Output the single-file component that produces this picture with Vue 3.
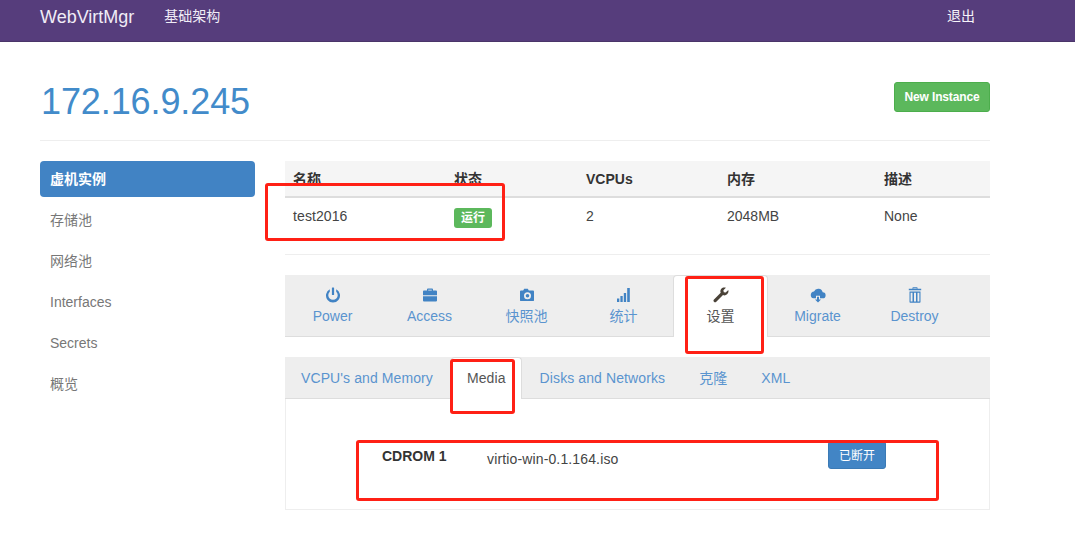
<script setup>
const side = ['虚机实例', '存储池', '网络池', 'Interfaces', 'Secrets', '概览']
const cols = ['名称', '状态', 'VCPUs', '内存', '描述']
const subs = ["VCPU's and Memory", 'Media', 'Disks and Networks', '克隆', 'XML']
const tabs = [
  { label: 'Power', icon: 'power' },
  { label: 'Access', icon: 'case' },
  { label: '快照池', icon: 'camera' },
  { label: '统计', icon: 'signal' },
  { label: '设置', icon: 'wrench', active: true },
  { label: 'Migrate', icon: 'cloud' },
  { label: 'Destroy', icon: 'trash' },
]
const marks = [
  { id: 'm1', cls: 'mark-row' },
  { id: 'm2', cls: 'mark-tab' },
  { id: 'm3', cls: 'mark-media' },
  { id: 'm4', cls: 'mark-cdrom' },
]
</script>

<template>
  <div class="page">
    <header class="navbar">
      <span class="brand">WebVirtMgr</span>
      <span class="nav-link">基础架构</span>
      <span class="logout">退出</span>
    </header>

    <div class="container">
      <div class="title-row">
        <h1>172.16.9.245</h1>
        <button class="btn-new">New Instance</button>
      </div>

      <div class="columns">
        <nav class="side">
          <a v-for="(s, i) in side" :key="s" :class="['side-item', { on: i === 0 }]">{{ s }}</a>
        </nav>

        <main class="main">
          <div class="tbl">
            <div class="tbl-row head">
              <span v-for="c in cols" :key="c">{{ c }}</span>
            </div>
            <div class="tbl-row body">
              <span class="wide">test2016</span>
              <span><b class="label">运行</b></span>
              <span>2</span>
              <span>2048MB</span>
              <span>None</span>
            </div>
          </div>

          <div class="tabs">
            <div v-for="t in tabs" :key="t.label" :class="['tab', { on: t.active }]">
              <svg class="ico" viewBox="0 0 16 16" fill="currentColor">
                <template v-if="t.icon === 'power'">
                  <path d="M4.800 2.300v2.400a4.700 4.700 0 1 0 6.400 0V2.300a7 7 0 1 1-6.400 0Z" />
                  <rect x="6.900" y="0.500" width="2.200" height="7.500" rx="0.500" />
                </template>
                <template v-else-if="t.icon === 'case'">
                  <path d="M5 3.600V2.400C5 1.900 5.400 1.500 5.900 1.500h4.200c.5 0 .9.4.9.9v1.200h3.100c.5 0 .9.4.9.9v3.700H1V4.500c0-.5.4-.9.900-.9H5Zm1.200 0h3.600V2.700H6.200v.9Z" />
                  <path d="M1 9.200h14v4.400c0 .5-.4.900-.9.900H1.900c-.5 0-.9-.4-.9-.9V9.200Z" />
                </template>
                <template v-else-if="t.icon === 'camera'">
                  <path fill-rule="evenodd" d="M1.900 3.500h2.300l1-1.700h3.600l1 1.700h4.300c.5 0 .9.400.9.900v8.800c0 .5-.4.900-.9.900H1.900c-.5 0-.9-.4-.9-.9V4.400c0-.5.4-.9.900-.9ZM8.500 5.300a3.500 3.500 0 1 0 0 7 3.500 3.500 0 0 0 0-7Zm0 1.700a1.800 1.800 0 1 1 0 3.600 1.800 1.800 0 0 1 0-3.600Z" />
                </template>
                <template v-else-if="t.icon === 'signal'">
                  <rect x="1" y="11.500" width="2.300" height="3.500" />
                  <rect x="4.400" y="9" width="2.300" height="6" />
                  <rect x="7.800" y="6" width="2.300" height="9" />
                  <rect x="11.200" y="1" width="2.600" height="14" />
                </template>
                <template v-else-if="t.icon === 'wrench'">
                  <path d="M15.300 3.100 12.700 5.600 10.800 5.200 10.400 3.300 12.900 .8C11.200.2 9.300.6 8.300 1.800 7.300 3 7.100 4.500 7.700 5.800L1 12.500c-.7.700-.7 1.700 0 2.300.6.700 1.600.7 2.300 0L10 8.100c1.400.6 3 .3 4.100-.8 1.200-1.100 1.700-2.700 1.200-4.200Z" />
                </template>
                <template v-else-if="t.icon === 'cloud'">
                  <path d="M12.700 5.300A4.600 4.600 0 0 0 4 4.400 3.500 3.500 0 0 0 3.500 11.300H6V8.800h4v2.500h2.500a3 3 0 0 0 .2-6Z" />
                  <path d="M7 9.800h2v2.600h2L8 15.600 5 12.400h2V9.800Z" />
                </template>
                <template v-else>
                  <path d="M6 .3h4c.3 0 .5.2.5.5v1h3.700v1.500H1.800V1.800h3.700v-1c0-.3.2-.5.500-.5Zm.3 .9v.6h3.400v-.6H6.300Z" />
                  <path fill-rule="evenodd" d="M2.500 4.600h11v10.500c0 .4-.3.700-.7.700H3.200c-.4 0-.7-.3-.7-.7V4.600Zm1.100 1.200v8.800h1.900V5.800H3.600Zm3.400 0v8.800h2V5.800h-2Zm3.500 0v8.800h1.900V5.800h-1.900Z" />
                </template>
              </svg>
              <span class="tab-label">{{ t.label }}</span>
            </div>
          </div>

          <div class="subtabs">
            <a v-for="(s, i) in subs" :key="s" :class="['sub', { on: i === 1 }]">{{ s }}</a>
          </div>

          <section class="panel">
            <div class="media-row">
              <strong class="cd">CDROM 1</strong>
              <span class="iso">virtio-win-0.1.164.iso</span>
              <button class="btn-eject">已断开</button>
            </div>
          </section>
        </main>
      </div>
    </div>

    <div v-for="m in marks" :key="m.id" :class="['mark', m.cls]"></div>
  </div>
</template>

<style>
html, body { margin: 0; background: #fff; }
</style>

<style scoped>
.page {
  position: relative;
  width: 1075px;
  height: 558px;
  overflow: hidden;
  font-family: "Liberation Sans", "Noto Sans CJK SC", sans-serif;
  font-size: 14px;
  line-height: 20px;
  color: #333;
}
.navbar {
  display: flex;
  align-items: center;
  height: 41px;
  padding: 0 40px;
  background: #563d7c;
  border-bottom: 1px solid #4a3569;
  color: #fff;
}
.brand { font-size: 18px; color: #f0ecf6; position: relative; top: -4px; }
.nav-link { margin-left: 30px; color: #f0ecf6; font-size: 14px; position: relative; top: -5px; }
.logout { margin-left: auto; margin-right: 60px; font-size: 14px; color: #f7f5fa; position: relative; top: -5px; }
.container { width: 950px; margin-left: 40px; }
.title-row {
  display: flex;
  align-items: center;
  justify-content: space-between;
  height: 98px;
  border-bottom: 1px solid #eee;
}
h1 {
  margin: 22px 0 0 1px;
  font-size: 36px;
  line-height: 40px;
  font-weight: 400;
  color: #428bca;
  letter-spacing: -.1px;
}
.btn-new {
  width: 96px;
  height: 30px;
  margin-top: 12px;
  padding: 0;
  border: 1px solid #4cae4c;
  border-radius: 3px;
  background: #5cb85c;
  color: #fff;
  font: 700 12px/18px "Liberation Sans", sans-serif;
  letter-spacing: -.15px;
}
.columns { display: flex; margin-top: 20px; }
.side { width: 215px; flex: none; display: flex; flex-direction: column; gap: 5px; }
.side-item {
  height: 36px;
  line-height: 36px;
  padding-left: 10px;
  border-radius: 4px;
  color: #777;
}
.side-item.on { background: #4183c4; color: #fff; font-weight: 700; line-height: 37px; }
.main { width: 705px; margin-left: 30px; }
.tbl { height: 93px; border-bottom: 1px solid #eee; }
.tbl-row { display: grid; grid-template-columns: 161px 132px 141px 157px 1fr; padding-left: 8px; }
.head { height: 35px; line-height: 37px; background: #f5f5f5; border-bottom: 2px solid #ddd; font-weight: 700; font-size: 14px; }
.body { height: 36px; line-height: 36px; color: #444; }
.wide { letter-spacing: .1px; }
.label {
  display: inline-block;
  width: 38px;
  height: 20px;
  line-height: 20px;
  text-align: center;
  border-radius: 3px;
  background: #5cb85c;
  color: #fff;
  font-size: 12px;
  vertical-align: -1px;
}
.tabs {
  display: flex;
  height: 61px;
  margin-top: 20px;
  background: #eee;
  border-bottom: 1px solid #ddd;
}
.tab {
  width: 95px;
  margin-right: 2px;
  height: 62px;
  box-sizing: border-box;
  padding-top: 11px;
  display: flex;
  flex-direction: column;
  align-items: center;
  color: #5a94cf;
  border-radius: 4px 4px 0 0;
  border: 1px solid transparent;
  border-bottom: 0;
}
.tab.on { background: #fff; color: #555; border-color: #ddd; }
.ico { width: 16px; height: 16px; display: block; margin-bottom: 3px; color: #4183c4; }
.tab.on .ico { color: #4a4238; }
.tab-label { line-height: 20px; }
.subtabs {
  display: flex;
  height: 41px;
  margin-top: 20px;
  background: #eee;
  border-bottom: 1px solid #ddd;
}
.sub {
  padding: 0 16px;
  margin-right: 2px;
  line-height: 43px;
  color: #5a94cf;
  height: 42px;
  box-sizing: border-box;
  white-space: nowrap;
  letter-spacing: .1px;
}
.sub.on {
  background: #fff;
  color: #555;
  border: 1px solid #ddd;
  border-bottom: 0;
  border-radius: 4px 4px 0 0;
  line-height: 41px;
  padding: 0 15px;
}
.panel {
  height: 111px;
  box-sizing: border-box;
  border: 1px solid #eee;
  border-top: 0;
}
.media-row { position: relative; display: flex; padding: 47px 0 0 96px; }
.cd { width: 105px; line-height: 20px; }
.iso { line-height: 20px; margin-top: 3px; color: #444; letter-spacing: .14px; }
.btn-eject {
  position: absolute;
  left: 542px;
  top: 42px;
  width: 58px;
  height: 28px;
  padding: 2px 0 0;
  border: 1px solid #3b7ab5;
  border-radius: 3px;
  background: #4285c5;
  color: #fff;
  font: 400 12px/18px "Liberation Sans", "Noto Sans CJK SC", sans-serif;
}
.mark {
  position: absolute;
  box-sizing: border-box;
  border: 3px solid #ff2015;
  border-radius: 3px;
}
.mark-row { left: 265px; top: 183px; width: 240px; height: 58px; }
.mark-tab { left: 685px; top: 276px; width: 79px; height: 78px; }
.mark-media { left: 450px; top: 359px; width: 65px; height: 55px; }
.mark-cdrom { left: 356px; top: 440px; width: 583px; height: 61px; }
</style>
